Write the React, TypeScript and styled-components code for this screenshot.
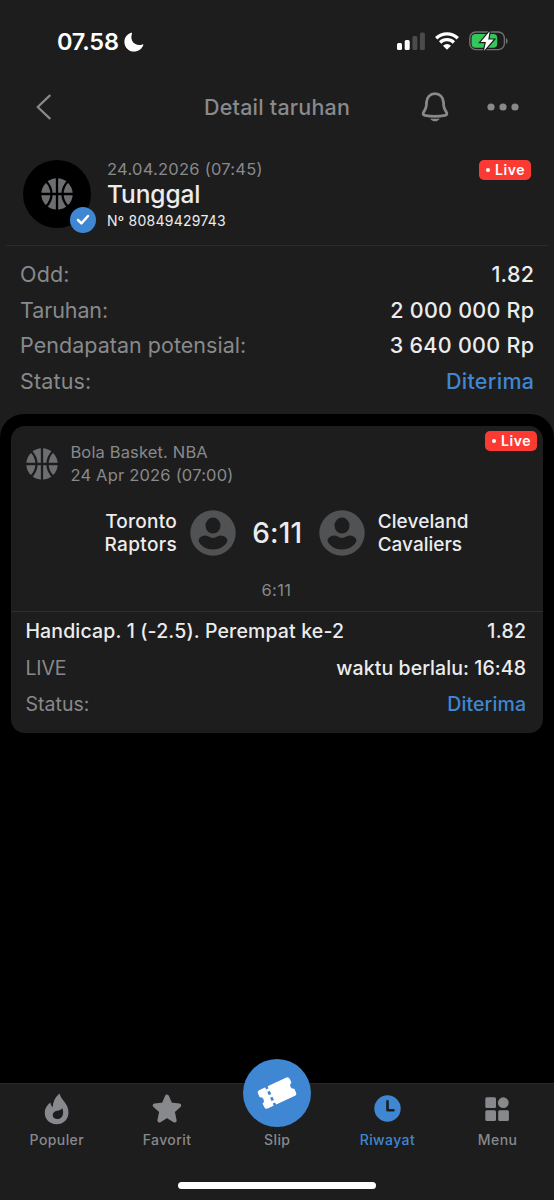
import React from 'react';
import styled, { createGlobalStyle } from 'styled-components';

const GREY = '#88898c';
const BLUE = '#3f87d2';
const PANEL = '#1d1d1d';
const LIGHT = '#ececee';

const GlobalStyle = createGlobalStyle`
  * { box-sizing: border-box; }
  body {
    margin: 0;
    background: #000;
    font-family: Inter, Roboto, "Liberation Sans", sans-serif;
    color: ${LIGHT};
  }
  svg { display: block; flex: none; }
`;

const Screen = styled.div`
  width: 554px;
  height: 1200px;
  display: flex;
  flex-direction: column;
  background: #000;
  overflow: hidden;
`;

const Text = styled.span<{ $size: number; $line?: number; $track?: number; $color?: string; $weight?: number }>`
  font-size: ${p => p.$size}px;
  line-height: ${p => (p.$line ? `${p.$line}px` : 'normal')};
  letter-spacing: ${p => p.$track ?? 0}px;
  margin-right: ${p => -(p.$track ?? 0)}px;
  color: ${p => p.$color ?? LIGHT};
  font-weight: ${p => p.$weight ?? 400};
  white-space: nowrap;
`;

const TopPanel = styled.div`
  height: 414px;
  flex: none;
  background: ${PANEL};
`;

const StatusBar = styled.div`
  height: 80px;
  padding: 2px 46px 0 57px;
  display: flex;
  align-items: center;
  justify-content: space-between;
`;

const Clock = styled.div`
  display: flex;
  align-items: center;
  gap: 5px;
  padding-top: 1px;
`;

const StatusIcons = styled.div`
  display: flex;
  align-items: center;
  gap: 10px;
`;

const Header = styled.header`
  height: 54px;
  padding: 0 35px;
  display: grid;
  grid-template-columns: 1fr auto 1fr;
  align-items: center;
`;

const HeaderActions = styled.div`
  display: flex;
  align-items: center;
  justify-content: flex-end;
  gap: 38px;
`;

const Summary = styled.section`
  height: 112px;
  margin: 0 6px;
  padding: 26px 17px 0;
  display: flex;
  align-items: flex-start;
  border-bottom: 1px solid #2b2b2c;
`;

const Avatar = styled.div`
  position: relative;
  width: 68px;
  height: 68px;
  margin-right: 16px;
  border-radius: 50%;
  background: #000;
  display: flex;
  align-items: center;
  justify-content: center;
`;

const CheckBadge = styled.div`
  position: absolute;
  right: -5px;
  bottom: -5px;
  width: 26px;
  height: 26px;
  border-radius: 50%;
  background: ${BLUE};
  display: flex;
  align-items: center;
  justify-content: center;
`;

const SummaryText = styled.div`
  flex: 1;
  display: flex;
  flex-direction: column;
  align-items: flex-start;
  margin-top: -3px;
`;

const LiveBadge = styled.div`
  width: 52px;
  height: 20px;
  border-radius: 5px;
  background: #fb3b33;
  display: flex;
  align-items: center;
  gap: 5px;
  padding-left: 7px;
  flex: none;
`;

const LiveDot = styled.i`
  width: 4px;
  height: 4px;
  border-radius: 50%;
  background: #fff;
`;

const InfoList = styled.div`
  padding: 10px 20px 0;
`;

const InfoRow = styled.div<{ $height: number }>`
  height: ${p => p.$height}px;
  display: flex;
  align-items: center;
  justify-content: space-between;
`;

const Body = styled.main`
  flex: 1;
  background: linear-gradient(${PANEL} 24px, #000 24px);
`;

const BodySheet = styled.div`
  height: 100%;
  padding: 11.500px 11px 0 11.400px;
  background: #000;
  border-radius: 24px 24px 0 0;
`;

const EventCard = styled.article`
  height: 307.500px;
  border-radius: 14px;
  background: ${PANEL};
`;

const EventHead = styled.div`
  height: 77px;
  padding: 5px 6px 0 15px;
  display: flex;
  align-items: flex-start;
`;

const EventTitle = styled.div`
  flex: 1;
  padding: 10px 0 0 12px;
  display: flex;
  flex-direction: column;
  align-items: flex-start;
`;

const BallSlot = styled.div`
  padding-top: 17px;
`;

const Match = styled.div`
  height: 61px;
  display: grid;
  grid-template-columns: 1fr 46px 83px 46px 1fr;
  align-items: center;
`;

const Team = styled.div<{ $side: 'left' | 'right' }>`
  display: flex;
  flex-direction: column;
  align-items: ${p => (p.$side === 'left' ? 'flex-end' : 'flex-start')};
  padding: 0 13px;
`;

const Score = styled.div`
  display: flex;
  justify-content: center;
`;

const Period = styled.div`
  height: 48px;
  padding: 17.500px 2px 0 0;
  display: flex;
  justify-content: center;
  border-bottom: 1px solid #2f2f30;
`;

const CardRows = styled.div`
  padding: 1.500px 17px 0 14px;
`;

const TabBar = styled.nav`
  height: 117px;
  flex: none;
  background: ${PANEL};
  border-top: 1px solid #29292a;
  display: flex;
  flex-direction: column;
  align-items: center;
  justify-content: space-between;
  padding-bottom: 11px;
`;

const Tabs = styled.div`
  display: grid;
  grid-template-columns: repeat(5, 110.2px);
`;

const Tab = styled.div`
  height: 70px;
  display: flex;
  flex-direction: column;
  align-items: center;
`;

const TabIcon = styled.div`
  height: 47px;
  padding-top: 2px;
  display: flex;
  align-items: center;
`;

const SlipButton = styled.div`
  width: 68px;
  height: 68px;
  margin: -25px 0 4px;
  border-radius: 50%;
  background: ${BLUE};
  display: flex;
  align-items: center;
  justify-content: center;
`;

const HomeIndicator = styled.div`
  width: 198px;
  height: 7px;
  border-radius: 4px;
  background: #fff;
`;

const Basketball = ({ line }: { line: string }) => (
  <svg width="32" height="32" viewBox="0 0 32 32">
    <circle cx="16" cy="16" r="15.700" fill="#6d6e71" />
    <g fill="none" stroke={line} strokeWidth="2.300">
      <path d="M16 0v32M0 16h32" />
      <path d="M4.800 3C8.800 7 10.500 11 10.500 16s-1.700 9-5.700 13M27.200 3C23.200 7 21.500 11 21.500 16s1.700 9 5.700 13" />
    </g>
  </svg>
);

const Person = () => (
  <svg width="46" height="46" viewBox="0 0 46 46">
    <circle cx="23" cy="23" r="22.700" fill="#515254" />
    <g fill={PANEL}>
      <ellipse cx="23" cy="15.600" rx="7.500" ry="8" />
      <path d="M12.600 26c2.500-1.100 4.200-.5 6 .6 2.700 1.700 6.100 1.700 8.800 0 1.800-1.100 3.500-1.700 6-.6 2.800 1.200 4.900 3.600 3.600 6-2.500 4.600-7.600 7.400-14 7.400S11.500 36.600 9 32c-1.300-2.400.8-4.800 3.600-6z" />
    </g>
  </svg>
);

const Live = () => (
  <LiveBadge>
    <LiveDot />
    <Text $size={14} $line={20} $weight={600} $track={0.55} $color="#fff">Live</Text>
  </LiveBadge>
);

const details = [
  { label: 'Odd:', value: '1.82', lt: 0.2, vt: 0.3 },
  { label: 'Taruhan:', value: '2 000 000 Rp', lt: -0.1, vt: 0.25 },
  { label: 'Pendapatan potensial:', value: '3 640 000 Rp', lt: 0.03, vt: 0.3 },
  { label: 'Status:', value: 'Diterima', accent: true, lt: 0.15, vt: 0.3 },
];

export default function App() {
  return (
    <>
      <GlobalStyle />
      <Screen>
        <TopPanel>
          <StatusBar>
            <Clock>
              <Text $size={23.5} $weight={600} $track={-0.2} $color="#fff">07.58</Text>
              <svg width="20" height="20" viewBox="0 0 19 19">
                <path d="M6.600.8C2.800 2.200.4 5.600.4 9.400c0 5.100 4.100 9.200 9.200 9.200 4 0 7.400-2.400 8.700-6 .2-.6-.3-1-.9-.8-1.100.4-2.100.5-3.100.5-4.300 0-7.300-3-7.300-7.200 0-1.200.2-2.300.6-3.400.2-.6-.3-1.200-1-.9z" fill="#fff" />
              </svg>
            </Clock>
            <StatusIcons>
              <svg width="28" height="19" viewBox="0 0 28 19">
                <rect x="0" y="11" width="5" height="7" rx="1.500" fill="#fff" />
                <rect x="7.700" y="8" width="5" height="10" rx="1.500" fill="#fff" />
                <rect x="15.400" y="4" width="5" height="14" rx="1.500" fill="#4b4b4c" />
                <rect x="22.900" y="0.500" width="5" height="17.500" rx="1.500" fill="#4b4b4c" />
              </svg>
              <svg width="24" height="18" viewBox="0 0 24 18">
                <g fill="none" stroke="#fff" strokeWidth="3.300">
                  <path d="M1.200 6.300a15.400 15.400 0 0 1 21.600 0" />
                  <path d="M5.100 10.500a9.800 9.800 0 0 1 13.800 0" />
                </g>
                <path d="M8 13.700a5.700 5.700 0 0 1 8 0L12 17.700z" fill="#fff" />
              </svg>
              <svg width="39" height="20" viewBox="0 0 39 20">
                <rect x=".8" y="1" width="34.600" height="17.600" rx="6" fill="none" stroke="#707072" strokeWidth="1.400" />
                <path d="M37 7v6c1-.5 1.700-1.600 1.700-3S38 7.500 37 7z" fill="#707072" />
                <rect x="2.600" y="2.900" width="25.600" height="13.800" rx="4" fill="#34c759" />
                <path d="M20.700.3L11.700 11h5.200l-1.900 8.700L24.600 8.600h-5.400z" fill="#fff" stroke={PANEL} strokeWidth="2.400" paintOrder="stroke" />
              </svg>
            </StatusIcons>
          </StatusBar>
          <Header>
            <svg width="18" height="26" viewBox="0 0 18 26">
              <path d="M14.700 1.700L2.700 13l12 11.300" fill="none" stroke={GREY} strokeWidth="2.300" strokeLinecap="round" strokeLinejoin="round" />
            </svg>
            <Text $size={21.5} $track={0.2} $color={GREY} $weight={500}>Detail taruhan</Text>
            <HeaderActions>
              <svg width="28" height="30" viewBox="0 0 28 30">
                <path d="M14 1.700c-4.900 0-8.300 3.600-8.500 8.600l-.2 3.400c-.3 3-1.600 4.500-2.700 6.500-.9 1.600-.5 2.900 1.200 3.200 6.600 1.200 13.800 1.200 20.400 0 1.700-.3 2.100-1.600 1.200-3.200-1.100-2-2.400-3.500-2.700-6.500l-.2-3.400c-.2-5-3.600-8.600-8.500-8.600z" fill="none" stroke={GREY} strokeWidth="2.800" strokeLinejoin="round" />
                <path d="M9.300 26.400c3.100.5 6.300.5 9.400 0-.8 1.800-2.500 2.900-4.700 2.900s-3.900-1.100-4.700-2.900z" fill={GREY} />
              </svg>
              <svg width="32" height="8" viewBox="0 0 32 8">
                <circle cx="4" cy="4" r="3.600" fill={GREY} />
                <circle cx="16" cy="4" r="3.600" fill={GREY} />
                <circle cx="28" cy="4" r="3.600" fill={GREY} />
              </svg>
            </HeaderActions>
          </Header>
          <Summary>
            <Avatar>
              <Basketball line="#000" />
              <CheckBadge>
                <svg width="14" height="12" viewBox="0 0 14 12">
                  <path d="M2 6l3.400 3.400L12 2" fill="none" stroke="#fff" strokeWidth="2.500" strokeLinecap="round" strokeLinejoin="round" />
                </svg>
              </CheckBadge>
            </Avatar>
            <SummaryText>
              <Text $size={16.5} $line={24} $track={0.25} $color={GREY}>24.04.2026 (07:45)</Text>
              <Text $size={24.5} $line={27} $track={-0.1} $weight={500}>Tunggal</Text>
              <Text $size={14} $line={26} $track={0.25}>Nº 80849429743</Text>
            </SummaryText>
            <Live />
          </Summary>
          <InfoList>
            {details.map(d => (
              <InfoRow key={d.label} $height={35.8}>
                <Text $size={21.5} $track={d.lt} $color={GREY}>{d.label}</Text>
                <Text $size={21.5} $track={d.vt} $weight={500} $color={d.accent ? BLUE : LIGHT}>{d.value}</Text>
              </InfoRow>
            ))}
          </InfoList>
        </TopPanel>

        <Body>
          <BodySheet>
            <EventCard>
              <EventHead>
                <BallSlot><Basketball line={PANEL} /></BallSlot>
                <EventTitle>
                  <Text $size={16.5} $line={23} $track={0.15} $color={GREY}>Bola Basket. NBA</Text>
                  <Text $size={16.5} $line={23} $track={0.2} $color={GREY}>24 Apr 2026 (07:00)</Text>
                </EventTitle>
                <Live />
              </EventHead>
              <Match>
                <Team $side="left">
                  <Text $size={19} $line={23.500} $track={0.25} $weight={500}>Toronto</Text>
                  <Text $size={19} $line={23.500} $track={0.35} $weight={500}>Raptors</Text>
                </Team>
                <Person />
                <Score>
                  <Text $size={28} $weight={500} $track={0.1}>6:11</Text>
                </Score>
                <Person />
                <Team $side="right">
                  <Text $size={19} $line={23.500} $track={0.1} $weight={500}>Cleveland</Text>
                  <Text $size={19} $line={23.500} $track={0} $weight={500}>Cavaliers</Text>
                </Team>
              </Match>
              <Period>
                <Text $size={16.5} $line={18} $track={0.4} $color={GREY}>6:11</Text>
              </Period>
              <CardRows>
                <InfoRow $height={36.6}>
                  <Text $size={19.5} $track={0.15} $weight={500}>Handicap. 1 (-2.5). Perempat ke-2</Text>
                  <Text $size={19.5} $track={0.3} $weight={500}>1.82</Text>
                </InfoRow>
                <InfoRow $height={36.6}>
                  <Text $size={19.5} $track={-0.1} $color={GREY}>LIVE</Text>
                  <Text $size={19.5} $track={0.08} $weight={500}>waktu berlalu: 16:48</Text>
                </InfoRow>
                <InfoRow $height={36.6}>
                  <Text $size={19.5} $track={0.05} $color={GREY}>Status:</Text>
                  <Text $size={19.5} $track={0.1} $weight={500} $color={BLUE}>Diterima</Text>
                </InfoRow>
              </CardRows>
            </EventCard>
          </BodySheet>
        </Body>

        <TabBar>
          <Tabs>
            <Tab>
              <TabIcon>
                <svg width="26" height="32" viewBox="0 0 26 32">
                  <path d="M15.600.6c.8 5.800 8.900 9.900 8.900 18.600 0 7.200-5.100 12-12 12S.8 26.600.8 19.800c0-4.800 2.400-7.500 5.500-10.300.4 1.900 1 3.500 2.300 4.800C9 8.600 11.200 4 15.600.6z" fill={GREY} />
                  <path d="M18.300 15.200c.8 2 .9 3.400.8 5-.3 3.600-2.800 5.900-5.800 5.900-2.600 0-4.600-1.600-4.600-4 0-2.300 1.900-3.700 4.400-4.300 2.200-.5 3.900-1 5.200-2.600z" fill={PANEL} />
                </svg>
              </TabIcon>
              <Text $size={14} $line={18} $track={0.4} $weight={500} $color={GREY}>Populer</Text>
            </Tab>
            <Tab>
              <TabIcon>
                <svg width="30" height="30" viewBox="0 0 30 30">
                  <path d="M15 2.500l3.500 8 8.700.9-6.500 5.800 1.900 9.300-7.600-4.700-7.600 4.700 1.900-9.300-6.500-5.800 8.700-.9z" fill={GREY} stroke={GREY} strokeWidth="4" strokeLinejoin="round" />
                </svg>
              </TabIcon>
              <Text $size={14} $line={18} $track={0.4} $weight={500} $color={GREY}>Favorit</Text>
            </Tab>
            <Tab>
              <SlipButton>
                <svg width="42" height="34" viewBox="0 0 42 34">
                  <g transform="rotate(-25 21 17)">
                    <path d="M6.500 6.800H35.500a3 3 0 0 1 3 3v3.800a3.500 3.500 0 0 0 0 6.800v3.800a3 3 0 0 1-3 3H6.500a3 3 0 0 1-3-3v-3.800a3.500 3.500 0 0 0 0-6.800v-3.800a3 3 0 0 1 3-3z" fill="#fff" />
                    <path d="M14 6v3.200M14 12v3.600M14 18.400v3.600M14 24.800v3.200" stroke={BLUE} strokeWidth="2.700" />
                  </g>
                </svg>
              </SlipButton>
              <Text $size={14} $line={18} $track={0.4} $weight={500} $color={GREY}>Slip</Text>
            </Tab>
            <Tab>
              <TabIcon>
                <svg width="27" height="27" viewBox="0 0 27 27">
                  <circle cx="13.500" cy="13.500" r="13.200" fill={BLUE} />
                  <path d="M13.500 6.200v9h6" fill="none" stroke={PANEL} strokeWidth="2.600" strokeLinecap="round" strokeLinejoin="round" />
                </svg>
              </TabIcon>
              <Text $size={14} $line={18} $track={0.4} $weight={500} $color={BLUE}>Riwayat</Text>
            </Tab>
            <Tab>
              <TabIcon>
                <svg width="24" height="24" viewBox="0 0 24 24">
                  <g fill={GREY}>
                    <rect x=".3" y=".3" width="10.700" height="10.700" rx="1.500" />
                    <circle cx="18.300" cy="5.700" r="5.400" />
                    <rect x=".3" y="13.200" width="10.700" height="10.700" rx="1.500" />
                    <rect x="13.200" y="13.200" width="10.700" height="10.700" rx="1.500" />
                  </g>
                </svg>
              </TabIcon>
              <Text $size={14} $line={18} $track={0.4} $weight={500} $color={GREY}>Menu</Text>
            </Tab>
          </Tabs>
          <HomeIndicator />
        </TabBar>
      </Screen>
    </>
  );
}
